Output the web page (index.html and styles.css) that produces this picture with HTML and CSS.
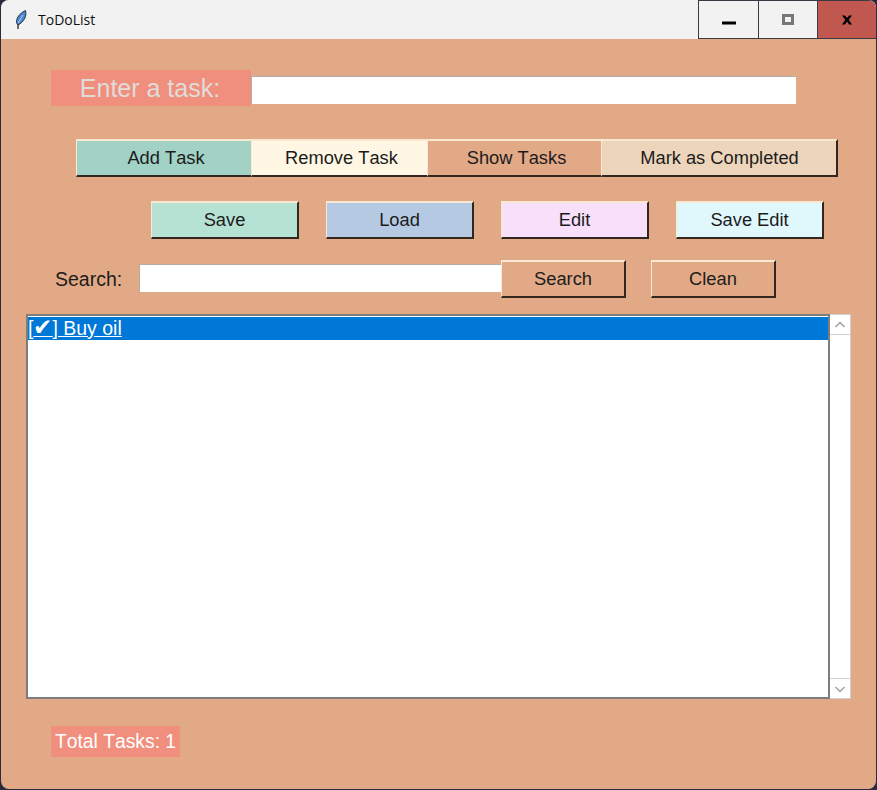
FILE: index.html
```html
<!DOCTYPE html>
<html>
<head>
    <link rel="stylesheet" href="styles.css">
    <title>ToDoList</title>
</head>
<body>
    <div class="window">
        <div class="titlebar">
            <svg class="app-icon" width="16" height="20" viewBox="0 0 16 20">
                <path d="M5 14 L5 19" stroke="#333" stroke-width="1.4" fill="none"/>
                <path d="M5 15 C2 13 3 5 12.500 0.500 C14 6 11 12 5 15 Z" fill="#4a86cf" stroke="#27364a" stroke-width="1"/>
                <path d="M5 13 L10 5" stroke="#b9d4f2" stroke-width="1" fill="none"/>
            </svg>
            <span class="title">ToDoList</span>
            <div class="win-btn min-btn">
                <svg width="14" height="4" class="min-icon" viewBox="0 0 14 4"><rect width="14" height="3" y="0.5" fill="#000"/></svg>
            </div>
            <div class="win-btn">
                <svg width="12" height="12" class="max-icon" viewBox="0 0 12 12"><rect x="1.5" y="1.5" width="9" height="8" fill="#f2f2f2" stroke="#777" stroke-width="3"/></svg>
            </div>
            <div class="win-btn close-btn">
                <svg width="12" height="12" class="close-icon" viewBox="0 0 12 12"><path d="M1 1.5 H4 L6 4 L8 1.5 H11 L7.7 5.7 L11 10.500 H8 L6 7.500 L4 10.500 H1 L4.300 5.700 Z" fill="#000"/></svg>
            </div>
        </div>

        <div class="content">
            <div class="task-row">
                <label class="task-label">Enter a task:</label>
                <input type="text" class="task-input">
            </div>

            <div class="main-btns">
                <button class="btn add-btn">Add Task</button>
                <button class="btn remove-btn">Remove Task</button>
                <button class="btn show-btn">Show Tasks</button>
                <button class="btn mark-btn">Mark as Completed</button>
            </div>

            <div class="file-btns">
                <button class="btn save-btn">Save</button>
                <button class="btn load-btn">Load</button>
                <button class="btn edit-btn">Edit</button>
                <button class="btn saveedit-btn">Save Edit</button>
            </div>

            <div class="search-row">
                <label class="search-label">Search:</label>
                <input type="text" class="search-input">
                <button class="btn search-btn">Search</button>
                <button class="btn clean-btn">Clean</button>
            </div>

            <div class="list-wrap">
                <div class="listbox">
                    <div class="list-item">[<span class="check">✔</span>] Buy oil</div>
                </div>
                <div class="scrollbar">
                    <div class="arrow">
                        <svg width="12" height="8" viewBox="0 0 12 8"><path d="M1.500 6 L6 1.500 L10.500 6" fill="none" stroke="#a0a0a0" stroke-width="1.500"/></svg>
                    </div>
                    <div class="track"></div>
                    <div class="arrow">
                        <svg width="12" height="8" viewBox="0 0 12 8"><path d="M1.500 2 L6 6.500 L10.500 2" fill="none" stroke="#a0a0a0" stroke-width="1.500"/></svg>
                    </div>
                </div>
            </div>

            <div class="total">Total Tasks: 1</div>
        </div>
    </div>
</body>
</html>
```

FILE: styles.css
```css
html, body {
    margin: 0;
    padding: 0;
    height: 790px;
    overflow: hidden;
    background: #2b2b3d;
    font-family: "Liberation Sans", Arial, sans-serif;
    font-kerning: none;
}
.window {
    width: 875px;
    height: 789px;
    margin-left: 1px;
    border-radius: 8px;
    overflow: hidden;
    background: #e2a986;
    display: flex;
    flex-direction: column;
}
.titlebar {
    height: 39px;
    flex: none;
    display: flex;
    align-items: center;
    background: #f2f2f2;
    padding-left: 12px;
}
.app-icon {
    flex: none;
}
.title {
    margin-left: 9px;
    font-family: "Open Sans", "Noto Sans", sans-serif;
    font-size: 14px;
    color: #111;
    flex: 1;
}
.win-btn {
    width: 59px;
    height: 39px;
    border-left: 1px solid #3a3a44;
    border-bottom: 1px solid #3a3a44;
    border-top: 1px solid #3a3a44;
    box-sizing: border-box;
    display: flex;
    justify-content: center;
    align-items: flex-start;
}
.min-btn {
    width: 60px;
}
.min-icon {
    margin-top: 20px;
}
.max-icon {
    margin-top: 13px;
}
.close-icon {
    margin-top: 13px;
}
.close-btn {
    background: #c1584f;
}
.content {
    padding: 31px 0 0 25px;
    flex: 1;
}
.task-row {
    display: flex;
    align-items: center;
    margin-left: 25px;
    height: 36px;
}
.task-label {
    width: 200px;
    height: 36px;
    line-height: 37px;
    text-align: center;
    font-size: 25px;
    padding-right: 2px;
    box-sizing: border-box;
    background: #f08f7e;
    color: #e0dcd8;
}
.task-input {
    width: 545px;
    height: 28px;
    margin-top: 4px;
    box-sizing: border-box;
    border: none;
    border-top: 1px solid #b5aca5;
    border-left: 1px solid #b5aca5;
    background: #fff;
    padding: 0;
}
.btn {
    height: 38px;
    box-sizing: border-box;
    padding: 0;
    font-family: "Liberation Sans", Arial, sans-serif;
    font-kerning: none;
    font-size: 18.3px;
    color: #1c1c1c;
    border-style: solid;
    border-width: 2px 2px 2px 1px;
    border-color: #fbe8d2 #33261f #33261f #fbe8d2;
    background: #e2a986;
}
.main-btns {
    display: flex;
    margin: 33px 0 0 50px;
}
.main-btns .btn {
    border-right-width: 0;
    padding-left: 4px;
}
.main-btns .mark-btn {
    border-right-width: 2px;
    width: 237px;
    padding-left: 1px;
}
.add-btn {
    width: 175px;
    background: #a2d2c5;
}
.remove-btn {
    width: 176px;
    background: #fff7e3;
}
.show-btn {
    width: 174px;
}
.mark-btn {
    background: #edd5bb;
}
.file-btns {
    display: flex;
    gap: 27px;
    margin: 24px 0 0 125px;
}
.file-btns .btn {
    width: 148px;
}
.save-btn {
    background: #b6e2d3;
}
.load-btn {
    background: #b5c9e2;
}
.edit-btn {
    background: #f8e0fb;
}
.file-btns .saveedit-btn {
    background: #e0f7fc;
}
.search-row {
    display: flex;
    align-items: center;
    margin: 21px 0 0 29px;
}
.search-label {
    width: 84px;
    margin-top: 1px;
    font-size: 19.5px;
    color: #1c1c1c;
}
.search-input {
    width: 362px;
    height: 28px;
    margin-top: -2px;
    box-sizing: border-box;
    border: none;
    border-top: 1px solid #b5aca5;
    border-left: 1px solid #b5aca5;
    background: #fff;
    padding: 0;
}
.search-btn, .clean-btn {
    width: 125px;
}
.clean-btn {
    margin-left: 25px;
}
.list-wrap {
    display: flex;
    margin-top: 16px;
    height: 385px;
}
.listbox {
    width: 804px;
    box-sizing: border-box;
    border: 2px solid #7d7d7d;
    border-bottom-width: 2px;
    background: #fff;
    padding-top: 1px;
}
.list-item {
    width: 800px;
    height: 23px;
    line-height: 23px;
    font-size: 19.5px;
    box-sizing: border-box;
    color: #fff;
    background: #0078d7;
    text-decoration: underline;
}
.check {
    font-size: 23px;
    line-height: 20px;
}
.scrollbar {
    width: 21px;
    display: flex;
    flex-direction: column;
    box-sizing: border-box;
    border: 1px solid #cfcfcf;
    border-left: none;
    background: #fff;
}
.arrow {
    height: 19px;
    flex: none;
    display: flex;
    align-items: center;
    justify-content: center;
}
.track {
    flex: 1;
    border-top: 1px solid #cfcfcf;
    border-bottom: 1px solid #cfcfcf;
}
.total {
    display: inline-block;
    margin: 27px 0 0 25px;
    width: 129px;
    height: 31px;
    line-height: 32px;
    box-sizing: border-box;
    padding-left: 4px;
    font-size: 19.3px;
    color: #fff;
    background: #f08f7e;
    white-space: nowrap;
}
```
